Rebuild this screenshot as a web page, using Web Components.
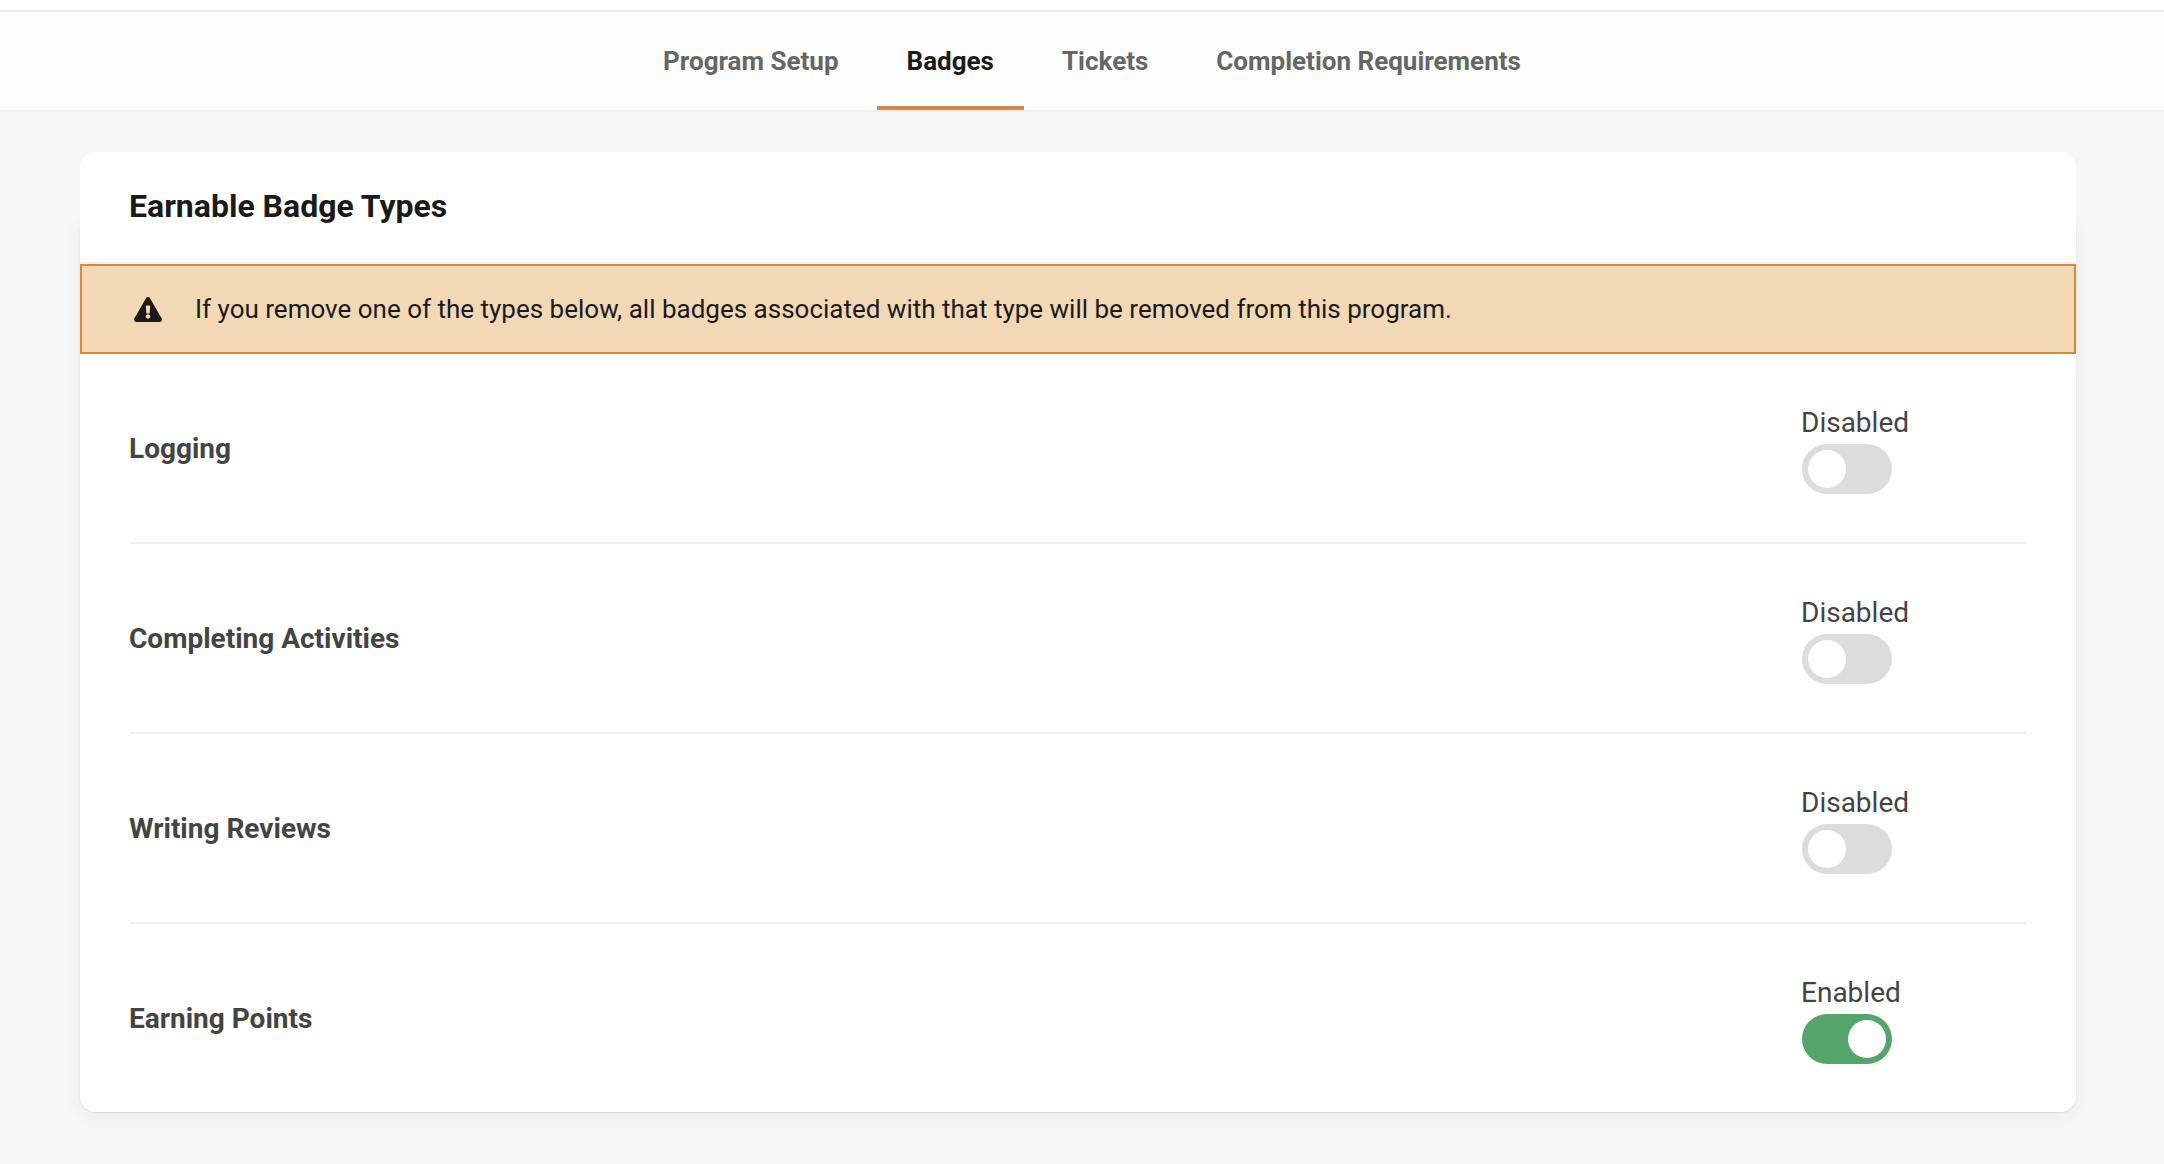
<!DOCTYPE html>
<html>
<head>
<meta charset="utf-8">
<title>Badges</title>
<style>
html, body { margin: 0; padding: 0; }
body { background: #f7f7f7; font-family: Roboto, "Liberation Sans", sans-serif; color: #444; height: 1164px; overflow: hidden; }
</style>
</head>
<body>
<top-tabs>
    <tab-link>Program Setup</tab-link>
    <tab-link active>Badges</tab-link>
    <tab-link>Tickets</tab-link>
    <tab-link>Completion Requirements</tab-link>
</top-tabs>
<page-main>
    <badge-card heading="Earnable Badge Types">
        <warn-banner>If you remove one of the types below, all badges associated with that type will be removed from this program.</warn-banner>
        <badge-row>Logging</badge-row>
        <badge-row>Completing Activities</badge-row>
        <badge-row>Writing Reviews</badge-row>
        <badge-row enabled last>Earning Points</badge-row>
    </badge-card>
</page-main>

<script>
class TopTabs extends HTMLElement {
    constructor() {
        super();
        var shadow = this.attachShadow({mode: 'open'});
        shadow.innerHTML = '<style>' +
            ' :host { display: block; background: #fff; padding-top: 10px; } ' +
            ' nav { display: flex; justify-content: center; gap: 8px; height: 98px; padding-left: 20px;' +
            ' background: #fdfdfd; border-top: 2px solid #eee; border-bottom: 2px solid #eee; } ' +
            '</style><nav><slot></slot></nav>';
    }
}
customElements.define('top-tabs', TopTabs);

class TabLink extends HTMLElement {
    constructor() {
        super();
        var shadow = this.attachShadow({mode: 'open'});
        shadow.innerHTML = '<style>' +
            ' :host { display: flex; align-items: center; box-sizing: border-box; height: 98px; padding: 4px 30px 0;' +
            ' border-bottom: 4px solid transparent; font-size: 26px; font-weight: 700; color: #666; white-space: nowrap; } ' +
            ' :host([active]) { color: #1a1a1a; border-bottom-color: #d98545; } ' +
            '</style><slot></slot>';
    }
}
customElements.define('tab-link', TabLink);

class PageMain extends HTMLElement {
    constructor() {
        super();
        var shadow = this.attachShadow({mode: 'open'});
        shadow.innerHTML = '<style>' +
            ' :host { display: block; padding: 40px 88px 0 80px; } ' +
            '</style><slot></slot>';
    }
}
customElements.define('page-main', PageMain);

class BadgeCard extends HTMLElement {
    constructor() {
        super();
        var shadow = this.attachShadow({mode: 'open'});
        shadow.innerHTML = '<style>' +
            ' :host { display: block; position: relative; background: #fff; border-radius: 16px; } ' +
            // shadow only starts part way down the header, like the reference
            ' :host::before { content: ""; position: absolute; left: 0; right: 0; top: 64px; bottom: 0; z-index: -1;' +
            ' border-radius: 16px; box-shadow: 0 1px 2px rgba(0,0,0,.10), 0 4px 20px rgba(0,0,0,.05); } ' +
            ' h2 { display: flex; align-items: center; box-sizing: border-box; height: 112px; margin: 0; padding: 0 49px 2px;' +
            ' background: #fff; border-radius: 16px 16px 0 0; border-bottom: 2px solid #eee;' +
            ' font-size: 32px; font-weight: 700; color: #1a1a1a; } ' +
            '</style><h2></h2><slot></slot>';
        shadow.querySelector('h2').textContent = this.getAttribute('heading');
    }
}
customElements.define('badge-card', BadgeCard);

class WarnBanner extends HTMLElement {
    constructor() {
        super();
        var shadow = this.attachShadow({mode: 'open'});
        shadow.innerHTML = '<style>' +
            ' :host { display: flex; align-items: center; gap: 33px; box-sizing: border-box; height: 90px; padding: 0 48px 0 52px;' +
            ' background: #f2d8b5; border: 2px solid #d98a3d; font-size: 26px; color: #1a1a1a; } ' +
            ' svg { width: 28px; height: 25px; flex: none; fill: #1a1a1a; } ' +
            '</style>' +
            '<svg viewBox="0 0 576 512"><path d="M569.517 440.013C587.975 472.007 564.806 512 527.94 512H48.054c-36.937 0-59.999-40.055-41.577-71.987L246.423 24.035c18.467-32.009 64.72-31.951 83.154 0l239.94 416.028zM288 354c-25.405 0-46 20.595-46 46s20.595 46 46 46 46-20.595 46-46-20.595-46-46-46zm-43.673-165.346l7.418 136c.347 6.364 5.609 11.346 11.982 11.346h48.546c6.373 0 11.635-4.982 11.982-11.346l7.418-136c.375-6.874-5.098-12.654-11.982-12.654h-63.383c-6.884 0-12.356 5.78-11.981 12.654z"/></svg>' +
            '<span><slot></slot></span>';
    }
}
customElements.define('warn-banner', WarnBanner);

class BadgeRow extends HTMLElement {
    constructor() {
        super();
        var shadow = this.attachShadow({mode: 'open'});
        let on = this.hasAttribute('enabled');
        shadow.innerHTML = '<style>' +
            ' :host { display: block; padding: 0 50px; } ' +
            ' .row { display: flex; align-items: center; justify-content: space-between; box-sizing: border-box; height: 190px;' +
            ' border-bottom: 2px solid #eee; } ' +
            ' :host([last]) .row { height: 188px; border-bottom: 0; } ' +
            ' .name { font-size: 28px; font-weight: 700; color: #444; margin-left: -1px; } ' +
            ' .state { width: 224px; flex: none; padding-top: 4px; } ' +
            '</style>' +
            '<div class="row"><div class="name"><slot></slot></div>' +
            '<div class="state"><toggle-switch label="' + (on ? 'Enabled' : 'Disabled') + '"' + (on ? ' on' : '') + '></toggle-switch></div></div>';
    }
}
customElements.define('badge-row', BadgeRow);

class ToggleSwitch extends HTMLElement {
    constructor() {
        super();
        var shadow = this.attachShadow({mode: 'open'});
        shadow.innerHTML = '<style>' +
            ' :host { display: block; } ' +
            ' .label { font-size: 28px; line-height: 34px; color: #444; margin: 0 0 4px -1px; } ' +
            ' .track { display: flex; box-sizing: border-box; width: 90px; height: 50px; padding: 6px; border-radius: 25px; background: #dcdcdc; } ' +
            ' .knob { width: 38px; height: 38px; border-radius: 50%; background: #fff; } ' +
            ' :host([on]) .track { background: #55a56b; justify-content: flex-end; } ' +
            '</style><div class="label"></div><div class="track"><div class="knob"></div></div>';
        shadow.querySelector('.label').textContent = this.getAttribute('label');
    }
}
customElements.define('toggle-switch', ToggleSwitch);
</script>
</body>
</html>
